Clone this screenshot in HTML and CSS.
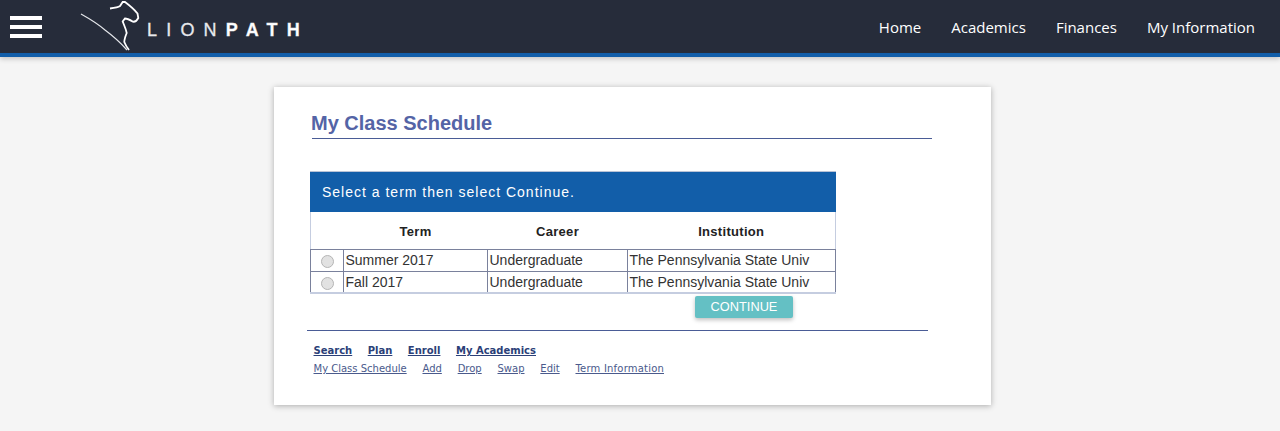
FILE: index.html
```html
<!DOCTYPE html>
<html lang="en">
<head>
  <meta charset="UTF-8" />
  <meta name="viewport" content="width=device-width, initial-scale=1.0" />
  <title>My Class Schedule</title>
  <link rel="stylesheet" href="styles.css">
</head>
<body>

  <header class="topbar">
    <div class="burger"><span></span><span></span><span></span></div>
    <svg class="lion" viewBox="0 0 60 53" width="60" height="53">
      <path class="swoosh" d="M1 14 C10 19 18 24 25 30 C33 36 40 42 47 50" />
      <path class="outline" d="M30 8.5 C34 8 38 7.5 40 6 L42.7 2 L45 2 C49 5 54 9 57.5 13.5 L58.3 18 C57 20.5 55 22 53 21.7 C50 20 47 18.5 45 18.5 L42.7 21.5 C44 25 46 29 46.7 33 C45.5 36 44.3 39 44.3 42 C45.5 45 47 47.5 49 50" />
    </svg>
    <div class="wordmark">LION<b>PATH</b></div>
    <nav class="mainnav">
      <a href="#">Home</a>
      <a href="#">Academics</a>
      <a href="#">Finances</a>
      <a href="#">My Information</a>
    </nav>
  </header>

  <main class="card">
    <h1 class="title">My Class Schedule</h1>

    <div class="term-box">
      <div class="term-head">Select a term then select Continue.</div>
      <table class="term-table">
        <tr>
          <th class="col-radio"></th>
          <th class="col-term">Term</th>
          <th class="col-career">Career</th>
          <th>Institution</th>
        </tr>
        <tr>
          <td class="radio-cell"><span class="radio"></span></td>
          <td>Summer 2017</td>
          <td>Undergraduate</td>
          <td>The Pennsylvania State Univ</td>
        </tr>
        <tr>
          <td class="radio-cell"><span class="radio"></span></td>
          <td>Fall 2017</td>
          <td>Undergraduate</td>
          <td>The Pennsylvania State Univ</td>
        </tr>
      </table>
    </div>

    <div class="actions">
      <button class="continue">CONTINUE</button>
    </div>

    <div class="links">
      <div class="links-main">
        <a href="#">Search</a>
        <a href="#">Plan</a>
        <a href="#">Enroll</a>
        <a href="#">My Academics</a>
      </div>
      <div class="links-sub">
        <a href="#">My Class Schedule</a>
        <a href="#">Add</a>
        <a href="#">Drop</a>
        <a href="#">Swap</a>
        <a href="#">Edit</a>
        <a href="#" class="term-info">Term Information</a>
      </div>
    </div>
  </main>

</body>
</html>
```

FILE: styles.css
```css
*, *::before, *::after {
  box-sizing: border-box;
}

html, body {
  height: 100%;
}

body {
  margin: 0;
  background-color: #f5f5f5;
  font-family: "Liberation Sans", Arial, sans-serif;
  color: #222;
  overflow: hidden;
}

.topbar {
  display: flex;
  align-items: center;
  height: 57px;
  background-color: #262c3a;
  border-bottom: 4px solid #125ea9;
  box-shadow: 0 2px 5px rgba(0, 0, 0, 0.2);
  padding-left: 10px;
}

.burger {
  display: flex;
  flex-direction: column;
  gap: 5px;
  width: 32px;
}

.burger span {
  height: 4px;
  background-color: #fff;
}

.lion {
  margin-left: 38px;
  flex-shrink: 0;
}

.swoosh {
  fill: none;
  stroke: #e4e6ea;
  stroke-width: 1.2;
}

.outline {
  fill: none;
  stroke: #fff;
  stroke-width: 1.8;
}

.wordmark {
  margin-left: 7px;
  margin-top: 8px;
  color: #e8e9ec;
  font-size: 18px;
  letter-spacing: 9.2px;
  white-space: nowrap;
  -webkit-text-stroke: 0.3px #e8e9ec;
}

.wordmark b {
  color: #fff;
}

.mainnav {
  display: flex;
  gap: 30px;
  margin-left: auto;
  margin-right: 25px;
}

.mainnav a {
  color: #fff;
  font-family: "Open Sans", sans-serif;
  font-size: 15px;
  text-decoration: none;
}

.card {
  width: 717px;
  height: 318px;
  margin: 30px 0 0 274px;
  padding: 23px 59px 0 36px;
  background-color: #fff;
  box-shadow: 0 1px 6px rgba(0, 0, 0, 0.3);
}

.title {
  margin: 0 0 32px 2px;
  padding-bottom: 1px;
  border-bottom: 1px solid #4a5c96;
  color: #5464a6;
  font-size: 20px;
  font-weight: bold;
  line-height: 27px;
  text-indent: -1px;
}

.term-box {
  width: 526px;
}

.term-head {
  height: 41px;
  padding: 12px 0 0 12px;
  background-color: #125ea9;
  border-top: 1px solid #b9c3d6;
  color: #fff;
  font-size: 14px;
  letter-spacing: 1px;
}

.term-table {
  width: 100%;
  border-collapse: collapse;
  table-layout: fixed;
  font-size: 14px;
}

.term-table th {
  height: 37px;
  padding: 2px 0 0;
  font-size: 13px;
  letter-spacing: 0.3px;
  text-align: center;
}

.term-table tr:first-child {
  border-left: 1px solid #c5cde0;
  border-right: 1px solid #c5cde0;
}

.term-table td {
  height: 22px;
  padding: 0 1.5px;
  border: 1px solid #7a819c;
  border-bottom: 2px solid #c5cde0;
  color: #333;
  white-space: nowrap;
}

.term-table tr:nth-child(2) td {
  border-bottom: 1px solid #7a819c;
}

.col-radio {
  width: 33px;
}

.col-term {
  width: 144px;
}

.col-career {
  width: 140px;
}

.radio-cell {
  text-align: center;
}

.radio {
  display: inline-block;
  width: 13px;
  height: 13px;
  margin-top: 1px;
  border: 1px solid #b5b5b5;
  border-radius: 50%;
  background-color: #e2e2e2;
  vertical-align: middle;
}

.actions {
  margin: 2px 0 0 385px;
}

.continue {
  display: block;
  width: 98px;
  height: 22px;
  padding: 0 0 1px;
  border: none;
  border-radius: 2px;
  background-color: #64c0c4;
  box-shadow: 0 2px 4px rgba(0, 0, 0, 0.25);
  color: #fff;
  font-family: "Liberation Sans", Arial, sans-serif;
  font-size: 12.8px;
}

.links {
  margin: 12px 0 0 -3px;
  padding: 13px 0 0 6.5px;
  border-top: 1px solid #4a5c96;
  width: 621px;
  font-family: "DejaVu Sans", Verdana, sans-serif;
}

.links a {
  color: #2b3f78;
}

.links-main {
  display: flex;
  gap: 15.5px;
  font-size: 10px;
  font-weight: bold;
  line-height: 14px;
}

.links-sub {
  display: flex;
  gap: 15.8px;
  margin-top: 4px;
  font-size: 10px;
  line-height: 14px;
}

.links-sub a {
  color: #4a5a8c;
}

.links-sub .term-info {
  letter-spacing: 0.2px;
}
```
